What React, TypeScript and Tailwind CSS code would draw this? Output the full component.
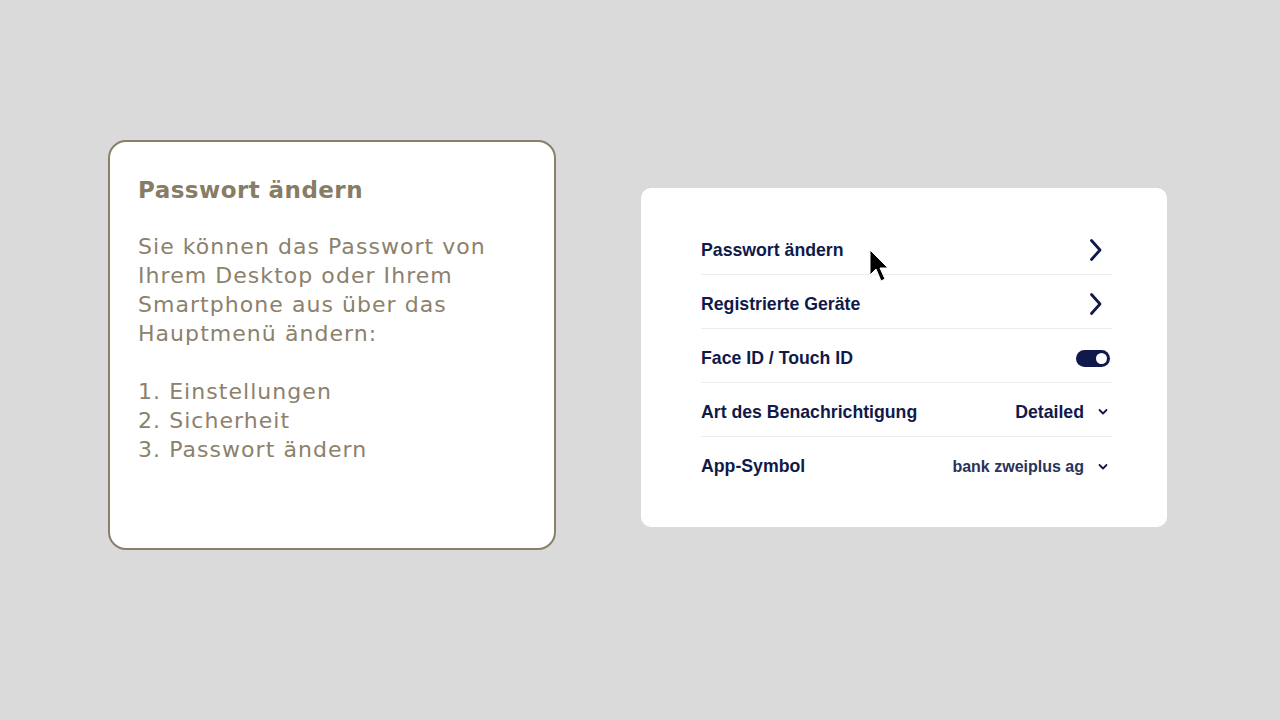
import React from 'react';

const navy = '#101a4a';

const ChevronRight = () => (
    <svg width="14" height="24" viewBox="0 0 14 24" fill="none" className="mr-[9px]">
        <path d="M2.5 2.5 L11 12 L2.5 21.5" stroke={navy} strokeWidth="2.8" strokeLinecap="round" strokeLinejoin="round" />
    </svg>
);

const ChevronDown = () => (
    <svg width="10" height="8" viewBox="0 0 10 8" fill="none" className="mr-[4px]">
        <path d="M1.5 2 L5 5.5 L8.5 2" stroke={navy} strokeWidth="1.8" strokeLinecap="round" strokeLinejoin="round" />
    </svg>
);

const Toggle = () => (
    <div className="w-[34px] h-[17px] rounded-full bg-[#101a4a] flex items-center justify-end pr-[3px] mr-[2px]">
        <div className="w-[11px] h-[11px] rounded-full bg-white" />
    </div>
);

const Cursor = () => (
    <svg className="absolute left-[869px] top-[249px]" width="24" height="38" viewBox="0 0 24 38">
        <path d="M1 1 L1 26 L7 20 L12 32 L16 30 L11 19 L19 19 Z" fill="#000" stroke="#fff" strokeWidth="1" />
    </svg>
);

interface RowProps {
    label: string;
    right: React.ReactNode;
    last?: boolean;
}

const Row: React.FC<RowProps> = ({ label, right, last }) => (
    <div className={`h-[54px] pt-[5px] flex items-center justify-between ${last ? '' : 'border-b border-[#ececec]'}`}>
        <span className="text-[17.7px] font-bold text-[#101a4a]">{label}</span>
        <div className="flex items-center">{right}</div>
    </div>
);

export default function App() {
    return (
        <div
            className="relative w-[1280px] h-[720px] bg-[#dadada] flex items-start pl-[108px] pt-[140px] gap-[85px]"
            style={{ fontFamily: '"Liberation Sans", Arial, sans-serif' }}
        >
            {/* info card */}
            <div
                className="w-[448px] h-[410px] bg-white border-2 border-[#8a7f69] rounded-[18px] pl-[28px] pt-[33px]"
                style={{ fontFamily: '"DejaVu Sans", Verdana, sans-serif' }}
            >
                <h2 className="text-[23px] font-bold text-[#877c66] leading-[30px] tracking-[0.45px]">Passwort ändern</h2>
                <p className="mt-[27px] text-[22px] text-[#8c816c] leading-[29px] tracking-[1.05px]">
                    Sie können das Passwort von
                    <br />
                    Ihrem Desktop oder Ihrem
                    <br />
                    Smartphone aus über das
                    <br />
                    Hauptmenü ändern:
                </p>
                <p className="mt-[29px] text-[22px] text-[#8c816c] leading-[29px] tracking-[1.05px]">
                    1. Einstellungen
                    <br />
                    2. Sicherheit
                    <br />
                    3. Passwort ändern
                </p>
            </div>

            {/* settings card */}
            <div className="mt-[48px] w-[526px] h-[339px] bg-white rounded-[10px] pl-[60px] pr-[55px] pt-[33px]">
                <Row label="Passwort ändern" right={<ChevronRight />} />
                <Row label="Registrierte Geräte" right={<ChevronRight />} />
                <Row label="Face ID / Touch ID" right={<Toggle />} />
                <Row
                    label="Art des Benachrichtigung"
                    right={
                        <>
                            <span className="text-[17.7px] font-bold text-[#101a4a] mr-[14px]">Detailed</span>
                            <ChevronDown />
                        </>
                    }
                />
                <Row
                    last
                    label="App-Symbol"
                    right={
                        <>
                            <span className="text-[16px] font-bold text-[#2a3358] mr-[14px]">bank zweiplus ag</span>
                            <ChevronDown />
                        </>
                    }
                />
            </div>

            <Cursor />
        </div>
    );
}
